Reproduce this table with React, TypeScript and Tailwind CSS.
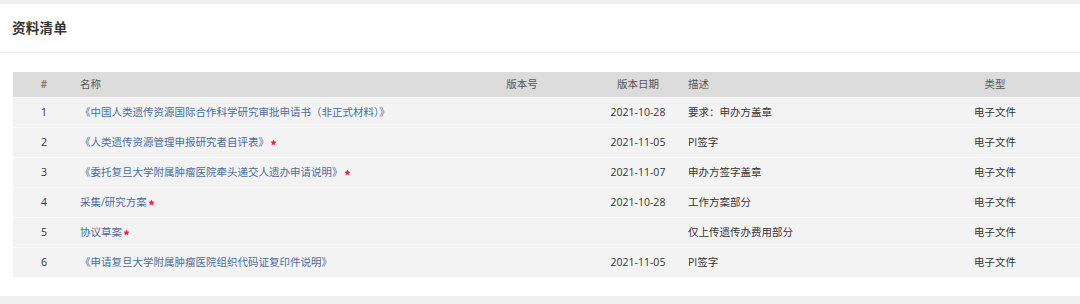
import React from "react";

type Row = { no: number; name: string; star?: boolean; date: string; desc: string; type: string };

const rows: Row[] = [
  { no: 1, name: "《中国人类遗传资源国际合作科学研究审批申请书（非正式材料）》", date: "2021-10-28", desc: "要求：申办方盖章", type: "电子文件" },
  { no: 2, name: "《人类遗传资源管理申报研究者自评表》", star: true, date: "2021-11-05", desc: "PI签字", type: "电子文件" },
  { no: 3, name: "《委托复旦大学附属肿瘤医院牵头递交人遗办申请说明》", star: true, date: "2021-11-07", desc: "申办方签字盖章", type: "电子文件" },
  { no: 4, name: "采集/研究方案", star: true, date: "2021-10-28", desc: "工作方案部分", type: "电子文件" },
  { no: 5, name: "协议草案", star: true, date: "", desc: "仅上传遗传办费用部分", type: "电子文件" },
  { no: 6, name: "《申请复旦大学附属肿瘤医院组织代码证复印件说明》", date: "2021-11-05", desc: "PI签字", type: "电子文件" },
];

const Star = () => (
  <svg width="7" height="7" viewBox="0 0 24 24" className="inline-block align-middle -mt-[1px]">
    <path d="M12 1.5l3.1 7.2 7.8.7-5.9 5.2 1.8 7.7L12 18.2l-6.8 4.1 1.8-7.7L1.1 9.4l7.8-.7z" fill="#f5224d" />
  </svg>
);

export default function App() {
  const font = { fontFamily: '"Open Sans", "Noto Sans CJK SC", sans-serif' };
  return (
    <div className="w-[1080px] h-[304px] bg-[#f0f0f0] overflow-hidden" style={font}>
      <div className="h-[4px]" />
      <div className="bg-white h-[292px] flex flex-col">
        <div className="h-[49px] flex items-center pl-[12px] border-b border-[#ececec]">
          <span className="text-[13.5px] font-bold text-[#333] tracking-[0.3px]">资料清单</span>
        </div>
        <div className="pt-[19px] pl-[13px]">
          <div className="grid grid-cols-[62px_371px_152px_80px_232px_170px] text-[10.5px]">
            <div className="contents text-[#555]">
              <div className="h-[25px] bg-[#dcdcdc] flex items-center justify-center">#</div>
              <div className="h-[25px] bg-[#dcdcdc] flex items-center pl-[5px]">名称</div>
              <div className="h-[25px] bg-[#dcdcdc] flex items-center justify-center">版本号</div>
              <div className="h-[25px] bg-[#dcdcdc] flex items-center justify-center">版本日期</div>
              <div className="h-[25px] bg-[#dcdcdc] flex items-center pl-[10px]">描述</div>
              <div className="h-[25px] bg-[#dcdcdc] flex items-center justify-center">类型</div>
            </div>
            {rows.map((r) => (
              <div key={r.no} className="contents text-[#333]">
                <div className="h-[30px] bg-[#f3f3f3] border-t border-[#fafafa] flex items-center justify-center">{r.no}</div>
                <div className="h-[30px] bg-[#f3f3f3] border-t border-[#fafafa] flex items-center pl-[5px] text-[#4c6c9c] whitespace-nowrap">
                  <span>{r.name}</span>
                  {r.star && (
                    <span className="ml-[1px]">
                      <Star />
                    </span>
                  )}
                </div>
                <div className="h-[30px] bg-[#f3f3f3] border-t border-[#fafafa]" />
                <div className="h-[30px] bg-[#f3f3f3] border-t border-[#fafafa] flex items-center justify-center">{r.date}</div>
                <div className="h-[30px] bg-[#f3f3f3] border-t border-[#fafafa] flex items-center pl-[10px] whitespace-nowrap">{r.desc}</div>
                <div className="h-[30px] bg-[#f3f3f3] border-t border-[#fafafa] flex items-center justify-center">{r.type}</div>
              </div>
            ))}
          </div>
        </div>
      </div>
    </div>
  );
}
